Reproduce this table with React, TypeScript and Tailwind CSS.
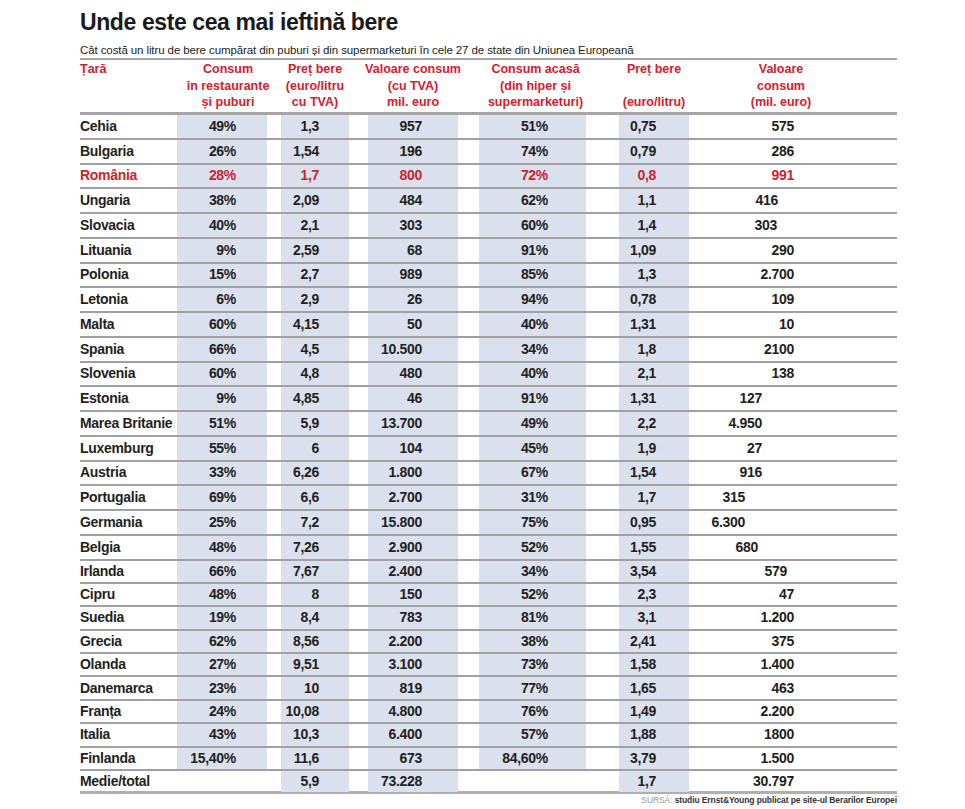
import React from 'react';

// [țară, consum restaurante, preț bere, valoare consum, consum acasă, preț bere acasă, valoare consum acasă, deplasare coloana 6]
type Row = [string, string, string, string, string, string, string, string];

const rows: Row[] = [
  ['Cehia', '49%', '1,3', '957', '51%', '0,75', '575', 'pr-[103px]'],
  ['Bulgaria', '26%', '1,54', '196', '74%', '0,79', '286', 'pr-[103px]'],
  ['România', '28%', '1,7', '800', '72%', '0,8', '991', 'pr-[103px]'],
  ['Ungaria', '38%', '2,09', '484', '62%', '1,1', '416', 'pr-[119px]'],
  ['Slovacia', '40%', '2,1', '303', '60%', '1,4', '303', 'pr-[120px]'],
  ['Lituania', '9%', '2,59', '68', '91%', '1,09', '290', 'pr-[103px]'],
  ['Polonia', '15%', '2,7', '989', '85%', '1,3', '2.700', 'pr-[103px]'],
  ['Letonia', '6%', '2,9', '26', '94%', '0,78', '109', 'pr-[103px]'],
  ['Malta', '60%', '4,15', '50', '40%', '1,31', '10', 'pr-[103px]'],
  ['Spania', '66%', '4,5', '10.500', '34%', '1,8', '2100', 'pr-[103px]'],
  ['Slovenia', '60%', '4,8', '480', '40%', '2,1', '138', 'pr-[103px]'],
  ['Estonia', '9%', '4,85', '46', '91%', '1,31', '127', 'pr-[135px]'],
  ['Marea Britanie', '51%', '5,9', '13.700', '49%', '2,2', '4.950', 'pr-[135px]'],
  ['Luxemburg', '55%', '6', '104', '45%', '1,9', '27', 'pr-[135px]'],
  ['Austria', '33%', '6,26', '1.800', '67%', '1,54', '916', 'pr-[135px]'],
  ['Portugalia', '69%', '6,6', '2.700', '31%', '1,7', '315', 'pr-[152px]'],
  ['Germania', '25%', '7,2', '15.800', '75%', '0,95', '6.300', 'pr-[152px]'],
  ['Belgia', '48%', '7,26', '2.900', '52%', '1,55', '680', 'pr-[139px]'],
  ['Irlanda', '66%', '7,67', '2.400', '34%', '3,54', '579', 'pr-[110px]'],
  ['Cipru', '48%', '8', '150', '52%', '2,3', '47', 'pr-[103px]'],
  ['Suedia', '19%', '8,4', '783', '81%', '3,1', '1.200', 'pr-[103px]'],
  ['Grecia', '62%', '8,56', '2.200', '38%', '2,41', '375', 'pr-[103px]'],
  ['Olanda', '27%', '9,51', '3.100', '73%', '1,58', '1.400', 'pr-[103px]'],
  ['Danemarca', '23%', '10', '819', '77%', '1,65', '463', 'pr-[103px]'],
  ['Franța', '24%', '10,08', '4.800', '76%', '1,49', '2.200', 'pr-[103px]'],
  ['Italia', '43%', '10,3', '6.400', '57%', '1,88', '1800', 'pr-[103px]'],
  ['Finlanda', '15,40%', '11,6', '673', '84,60%', '3,79', '1.500', 'pr-[103px]'],
];

const cols =
  'grid grid-cols-[97px_90px_14px_68px_19px_90px_21px_107px_33px_70px_208px]';
const shade = 'bg-[#dae0ee]';

function Cell({ v, pad, shaded }: { v: string; pad: string; shaded: boolean }) {
  return (
    <div className={`flex items-center justify-end ${pad} ${shaded ? shade : ''}`}>
      {v}
    </div>
  );
}

function Head({ lines, className = '' }: { lines: string[]; className?: string }) {
  return (
    <div className={`flex flex-col items-center ${className}`}>
      {lines.map((l, i) => (
        <div key={i} className="whitespace-nowrap h-[16.5px]">
          {l}
        </div>
      ))}
    </div>
  );
}

export default function App() {
  return (
    <div className="min-h-[809px] w-[965px] bg-white pt-[6px]">
      <div className="ml-[80px] w-[817px] text-[#231f20] font-['Liberation_Sans',Arial,sans-serif]">
        <h1 className="text-[23px] leading-[32px] font-bold tracking-[-0.4px] text-[#1a1a1a]">
          Unde este cea mai ieftină bere
        </h1>
        <p className="mt-[4px] text-[11.5px] leading-[16px] tracking-[-0.1px] text-[#222]">
          Cât costă un litru de bere cumpărat din puburi și din supermarketuri în cele 27 de state din Uniunea Europeană
        </p>

        {/* antet */}
        <div
          className={`${cols} border-t-2 border-b-[3px] border-[#a6a6a6] pt-[1px] pb-[1.5px] text-[12.5px] leading-[16.5px] font-bold text-[#d0202e]`}
        >
          <div>Țară</div>
          <Head lines={['Consum', 'în restaurante', 'și puburi']} className="pl-[12px]" />
          <div />
          <Head lines={['Preț bere', '(euro/litru', 'cu TVA)']} />
          <div />
          <Head lines={['Valoare consum', '(cu TVA)', 'mil. euro']} />
          <div />
          <Head lines={['Consum acasă', '(din hiper și', 'supermarketuri)']} className="pl-[6px]" />
          <div />
          <Head lines={['Preț bere', '', '(euro/litru)']} />
          <Head lines={['Valoare', 'consum', '(mil. euro)']} className="pr-[24px]" />
        </div>

        {/* date: rândurile de sus sunt puțin mai înalte, ca în original */}
        <div className="text-[14px] font-bold tracking-[-0.3px]">
          {rows.map((r, i) => {
            const ro = r[0] === 'România';
            return (
              <div
                key={r[0]}
                className={`${cols} ${i < 18 ? 'h-[24.75px]' : 'h-[23.4px]'} border-b-2 border-[#a0a0a0] ${ro ? 'text-[#c4262e]' : ''}`}
              >
                <div className="flex items-center whitespace-nowrap">{r[0]}</div>
                <Cell v={r[1]} pad="pr-[31px]" shaded />
                <div />
                <Cell v={r[2]} pad="pr-[30px]" shaded />
                <div />
                <Cell v={r[3]} pad="pr-[36px]" shaded />
                <div />
                <Cell v={r[4]} pad="pr-[38px]" shaded />
                <div />
                <Cell v={r[5]} pad="pr-[33px]" shaded />
                <Cell v={r[6]} pad={r[7]} shaded={false} />
              </div>
            );
          })}
          <div className={`${cols} h-[23.4px] border-b-[3px] border-[#b0b0b0]`}>
            <div className="flex items-center whitespace-nowrap">Medie/total</div>
            <div />
            <div />
            <Cell v="5,9" pad="pr-[30px]" shaded />
            <div />
            <Cell v="73.228" pad="pr-[36px]" shaded />
            <div />
            <div />
            <div />
            <Cell v="1,7" pad="pr-[33px]" shaded />
            <Cell v="30.797" pad="pr-[103px]" shaded={false} />
          </div>
        </div>

        <div className="mt-[1px] text-right text-[8.5px] leading-[11px] tracking-[-0.1px]">
          <span className="text-[#9a9a9a]">SURSĂ: </span>
          <span className="font-bold text-[#333]">studiu Ernst&amp;Young publicat pe site-ul Berarilor Europei</span>
        </div>
      </div>
    </div>
  );
}
